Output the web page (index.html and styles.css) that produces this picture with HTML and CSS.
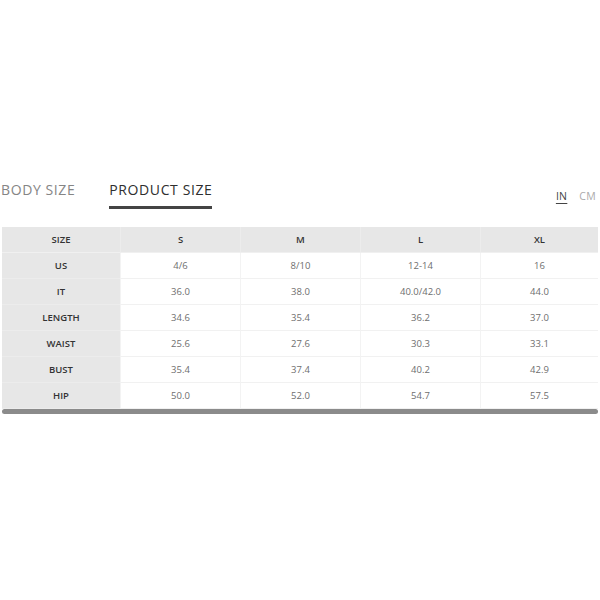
FILE: index.html
```html
<!DOCTYPE html>
<html>
<head>
<meta charset="utf-8">
<link rel="stylesheet" href="styles.css">
</head>
<body>
<div class="page">
  <div class="topbar">
    <div class="tabs">
      <div class="tab">BODY SIZE</div>
      <div class="tab active">PRODUCT SIZE</div>
    </div>
    <div class="units">
      <span class="unit active">IN</span>
      <span class="unit">CM</span>
    </div>
  </div>
  <div class="table">
    <div class="row head">
      <div class="cell label">SIZE</div>
      <div class="cell">S</div>
      <div class="cell">M</div>
      <div class="cell">L</div>
      <div class="cell">XL</div>
    </div>
    <div class="row">
      <div class="cell label">US</div>
      <div class="cell">4/6</div>
      <div class="cell">8/10</div>
      <div class="cell">12-14</div>
      <div class="cell">16</div>
    </div>
    <div class="row">
      <div class="cell label">IT</div>
      <div class="cell">36.0</div>
      <div class="cell">38.0</div>
      <div class="cell">40.0/42.0</div>
      <div class="cell">44.0</div>
    </div>
    <div class="row">
      <div class="cell label">LENGTH</div>
      <div class="cell">34.6</div>
      <div class="cell">35.4</div>
      <div class="cell">36.2</div>
      <div class="cell">37.0</div>
    </div>
    <div class="row">
      <div class="cell label">WAIST</div>
      <div class="cell">25.6</div>
      <div class="cell">27.6</div>
      <div class="cell">30.3</div>
      <div class="cell">33.1</div>
    </div>
    <div class="row">
      <div class="cell label">BUST</div>
      <div class="cell">35.4</div>
      <div class="cell">37.4</div>
      <div class="cell">40.2</div>
      <div class="cell">42.9</div>
    </div>
    <div class="row">
      <div class="cell label">HIP</div>
      <div class="cell">50.0</div>
      <div class="cell">52.0</div>
      <div class="cell">54.7</div>
      <div class="cell">57.5</div>
    </div>
    <div class="scrollbar"></div>
  </div>
</div>
</body>
</html>
```
FILE: styles.css
```css
html, body {
  margin: 0;
  padding: 0;
  background: #ffffff;
}
.page {
  padding: 180px 2px 0 1px;
  font-family: "Open Sans", "Liberation Sans", sans-serif;
}
.topbar {
  display: flex;
  justify-content: space-between;
  align-items: flex-start;
  height: 47px;
}
.tabs {
  display: flex;
  gap: 34px;
}
.tab {
  font-family: "Open Sans", "Liberation Sans", sans-serif;
  font-size: 14px;
  font-weight: 500;
  letter-spacing: 0.6px;
  color: #858585;
  line-height: 19px;
  padding-bottom: 7px;
  border-bottom: 3px solid transparent;
}
.tab.active {
  color: #2e2e2e;
  border-bottom-color: #444444;
}
.units {
  display: flex;
  gap: 12px;
  padding-top: 9px;
  padding-right: 2px;
}
.unit {
  font-size: 10.5px;
  letter-spacing: 0.3px;
  color: #aaaaaa;
  line-height: 14px;
}
.unit.active {
  color: #444444;
  text-decoration: underline;
  text-underline-offset: 3px;
  text-decoration-thickness: 1px;
}
.table {
  display: flex;
  flex-direction: column;
  margin-left: 1px;
}
.row {
  display: grid;
  grid-template-columns: 118px 120px 120px 120px 118px;
  height: 26px;
}
.cell {
  display: flex;
  align-items: center;
  justify-content: center;
  font-size: 9.5px;
  color: #6e6e6e;
  border-bottom: 1px solid #f1f1f1;
  border-left: 1px solid #f3f3f3;
  box-sizing: border-box;
}
.cell.label {
  background: #e7e7e7;
  color: #333333;
  font-weight: 600;
  border-left: none;
  border-bottom: 1px solid #ececec;
}
.row.head .cell {
  background: #e7e7e7;
  color: #333333;
  font-weight: 600;
  border-bottom: 1px solid #f0f0f0;
  border-left: 1px solid #ececec;
}
.row.head .cell.label {
  border-left: none;
}
.scrollbar {
  height: 5px;
  border-radius: 3px;
  background: #8b8b8b;
}
```
